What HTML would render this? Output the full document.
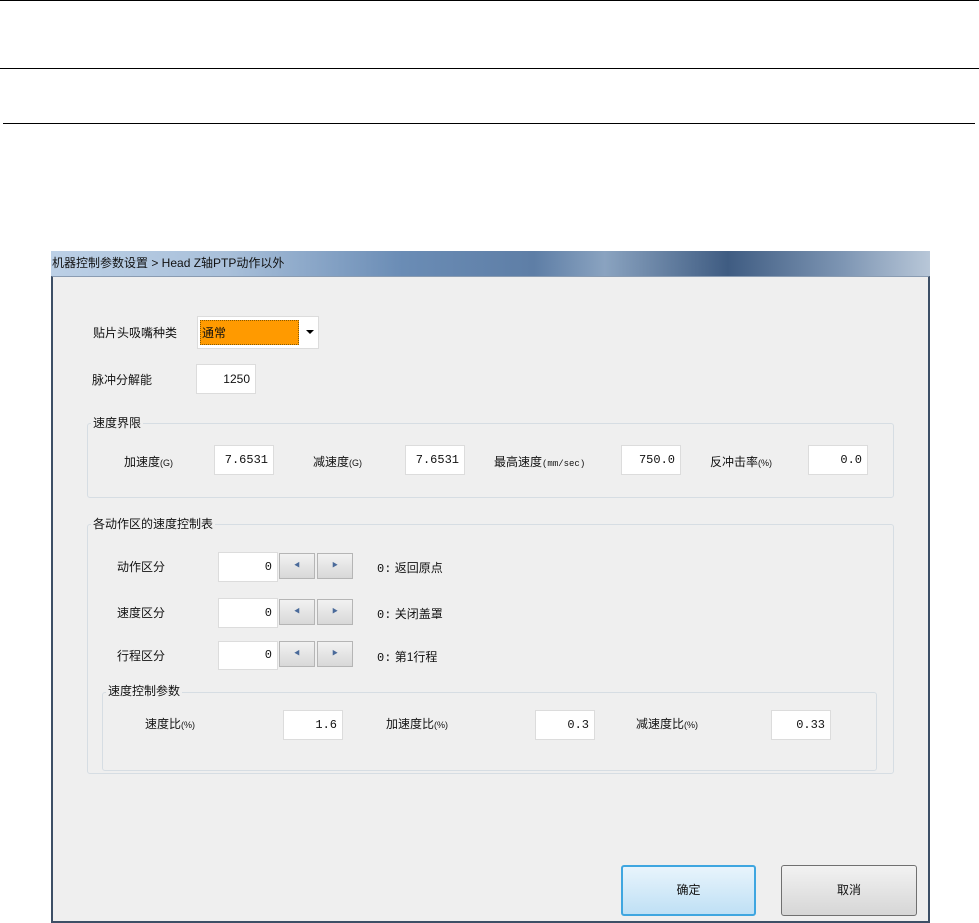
<!DOCTYPE html>
<html><head><meta charset="utf-8"><style>
*{margin:0;padding:0;box-sizing:border-box}
body{width:979px;height:923px;background:#fff;position:relative;overflow:hidden;font-family:"Liberation Sans","Noto Sans CJK SC",sans-serif;font-size:12px;color:#111}
.a{position:absolute}
.ln{position:absolute;height:1px;background:#000}
.tb{position:absolute;background:#fff;border:1px solid #dcdcdc;font-family:"Liberation Mono","Noto Sans CJK SC",monospace;font-size:12px;text-align:right;padding-right:5px}
.lb{position:absolute;white-space:nowrap;line-height:14px}
.lb small{font-size:9px}
.grp{position:absolute;border:1px solid #d6dde3;border-radius:3px}
.gl{position:absolute;background:#efefef;padding:0 2px;line-height:14px}
.sp{position:absolute;width:36px;height:26px;background:linear-gradient(#f2f2f2,#d8d8d8);border:1px solid #b5b5b5;font-size:6px;color:#4a6a9a;text-align:center;line-height:24px}
</style></head><body>
<div class="ln" style="left:0;top:0;width:979px"></div>
<div class="ln" style="left:0;top:68px;width:979px"></div>
<div class="ln" style="left:3px;top:123px;width:972px"></div>

<div class="a" style="left:51px;top:251px;width:879px;height:25px;background:linear-gradient(90deg,#bcd0e6 0%,#a9c0da 20%,#6a8cb5 40%,#5e7ea6 55%,#8aa3c0 63%,#3f5c82 77%,#7d95b3 90%,#b8c7d8 100%)"></div>
<div class="lb" style="left:52px;top:256px;font-size:12px;color:#111">机器控制参数设置 &gt; Head Z轴PTP动作以外</div>
<div class="a" style="left:51px;top:276px;width:879px;height:647px;background:#efefef;border-left:2px solid #3d4f66;border-right:2px solid #3d4f66;border-bottom:2px solid #3d4f66;border-top:1px solid #8a9cb2"></div>

<div class="lb" style="left:93px;top:326px">贴片头吸嘴种类</div>
<div class="a" style="left:197px;top:316px;width:122px;height:33px;background:#fff;border:1px solid #dcdcdc"></div>
<div class="a" style="left:200px;top:320px;width:99px;height:25px;background:#ff9a00;border:1px dotted #8a5a00"></div>
<div class="lb" style="left:202px;top:326px">通常</div>
<div class="a" style="left:306px;top:330px;width:0;height:0;border-left:4px solid transparent;border-right:4px solid transparent;border-top:4px solid #000"></div>

<div class="lb" style="left:92px;top:373px">脉冲分解能</div>
<div class="tb" style="left:196px;top:364px;width:60px;height:30px;line-height:28px;font-family:'Liberation Sans',sans-serif">1250</div>

<div class="grp" style="left:87px;top:423px;width:807px;height:75px"></div>
<div class="gl" style="left:91px;top:416px">速度界限</div>
<div class="lb" style="left:124px;top:455px">加速度<small>(G)</small></div>
<div class="tb" style="left:214px;top:445px;width:60px;height:30px;line-height:28px">7.6531</div>
<div class="lb" style="left:313px;top:455px">减速度<small>(G)</small></div>
<div class="tb" style="left:405px;top:445px;width:60px;height:30px;line-height:28px">7.6531</div>
<div class="lb" style="left:494px;top:455px">最高速度<small style="font-family:'Liberation Mono',monospace">(mm/sec)</small></div>
<div class="tb" style="left:621px;top:445px;width:60px;height:30px;line-height:28px">750.0</div>
<div class="lb" style="left:710px;top:455px">反冲击率<small>(%)</small></div>
<div class="tb" style="left:808px;top:445px;width:60px;height:30px;line-height:28px">0.0</div>

<div class="grp" style="left:87px;top:524px;width:807px;height:250px"></div>
<div class="gl" style="left:91px;top:517px">各动作区的速度控制表</div>

<div class="lb" style="left:117px;top:560px">动作区分</div>
<div class="tb" style="left:218px;top:552px;width:60px;height:30px;line-height:28px">0</div>
<div class="sp" style="left:279px;top:553px">◀</div><div class="sp" style="left:317px;top:553px">▶</div>
<div class="lb" style="left:377px;top:561px"><span style="font-family:'Liberation Mono',monospace">0:</span> 返回原点</div>

<div class="lb" style="left:117px;top:606px">速度区分</div>
<div class="tb" style="left:218px;top:598px;width:60px;height:30px;line-height:28px">0</div>
<div class="sp" style="left:279px;top:599px">◀</div><div class="sp" style="left:317px;top:599px">▶</div>
<div class="lb" style="left:377px;top:607px"><span style="font-family:'Liberation Mono',monospace">0:</span> 关闭盖罩</div>

<div class="lb" style="left:117px;top:649px">行程区分</div>
<div class="tb" style="left:218px;top:641px;width:60px;height:29px;line-height:27px">0</div>
<div class="sp" style="left:279px;top:641px">◀</div><div class="sp" style="left:317px;top:641px">▶</div>
<div class="lb" style="left:377px;top:650px"><span style="font-family:'Liberation Mono',monospace">0:</span> 第1行程</div>

<div class="grp" style="left:102px;top:692px;width:775px;height:79px"></div>
<div class="gl" style="left:106px;top:684px">速度控制参数</div>
<div class="lb" style="left:145px;top:717px">速度比<small>(%)</small></div>
<div class="tb" style="left:283px;top:710px;width:60px;height:30px;line-height:28px">1.6</div>
<div class="lb" style="left:386px;top:717px">加速度比<small>(%)</small></div>
<div class="tb" style="left:535px;top:710px;width:60px;height:30px;line-height:28px">0.3</div>
<div class="lb" style="left:636px;top:717px">减速度比<small>(%)</small></div>
<div class="tb" style="left:771px;top:710px;width:60px;height:30px;line-height:28px">0.33</div>

<div class="a" style="left:621px;top:865px;width:135px;height:51px;border:2px solid #3fa6e0;border-radius:3px;background:linear-gradient(#e8f4fc,#bfe0f5);text-align:center;line-height:47px">确定</div>
<div class="a" style="left:781px;top:865px;width:136px;height:51px;border:1px solid #707070;border-radius:3px;background:linear-gradient(#f2f2f2,#d6d6d6);text-align:center;line-height:49px">取消</div>
</body></html>
